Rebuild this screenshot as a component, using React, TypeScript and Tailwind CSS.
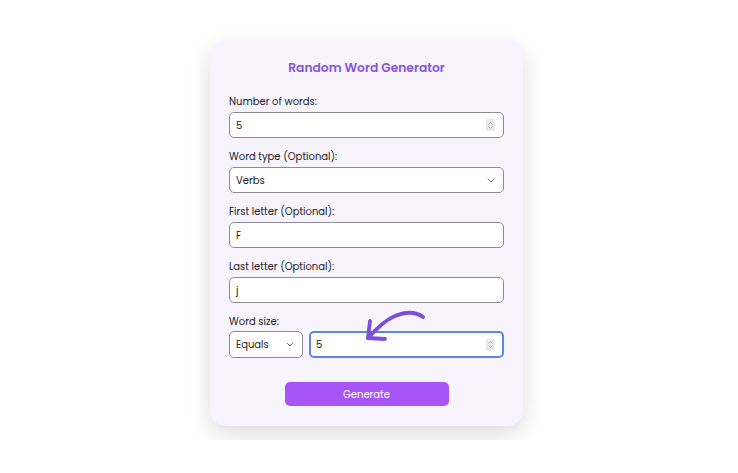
import React from "react";

const font = { fontFamily: "Poppins, 'Inter', 'Noto Sans', sans-serif" };

function Chevron() {
  return (
    <svg width="8" height="5" viewBox="0 0 8 5" fill="none">
      <path d="M1 1 L4 4 L7 1" stroke="#777" strokeWidth="1" strokeLinecap="round" strokeLinejoin="round" />
    </svg>
  );
}

function Spinner() {
  return (
    <div className="flex h-[12px] w-[9px] flex-col items-center justify-center gap-[1px] rounded-[1px] bg-[#e9e9ec]">
      <svg width="5" height="3" viewBox="0 0 5 3"><path d="M0.5 2.5 L2.5 0.6 L4.5 2.5" stroke="#a0a0a6" strokeWidth="0.8" fill="none" /></svg>
      <svg width="5" height="3" viewBox="0 0 5 3"><path d="M0.5 0.5 L2.5 2.4 L4.5 0.5" stroke="#a0a0a6" strokeWidth="0.8" fill="none" /></svg>
    </div>
  );
}

function Field({ label, value, kind }: { label: string; value: string; kind: "number" | "select" | "text" }) {
  return (
    <div className="flex flex-col gap-[3px]">
      <div className="text-[10px] leading-[14px] text-[#222]">{label}</div>
      <div className="flex h-[26px] items-center justify-between rounded-[5px] border border-[#8c8c92] bg-white pl-[6px] pr-[8px] text-[10px] text-[#222]">
        <span>{value}</span>
        {kind === "number" && <Spinner />}
        {kind === "select" && <Chevron />}
      </div>
    </div>
  );
}

export default function App() {
  return (
    <div className="h-[473px] w-[738px] bg-white" style={font}>
      <div className="h-[440px] overflow-hidden pt-[40px]">
        <div className="relative ml-[210px] w-[313px] rounded-[16px] bg-[#f7f4fe] px-[19px] pb-[20px] pt-[18px] shadow-[0_8px_22px_rgba(0,0,0,0.14)]">
          <div className="text-center text-[12.3px] font-semibold leading-[20px] text-[#8656da]">Random Word Generator</div>
          <div className="mt-[17px] flex flex-col gap-[12px]">
            <Field label="Number of words:" value="5" kind="number" />
            <Field label="Word type (Optional):" value="Verbs" kind="select" />
            <Field label="First letter (Optional):" value="F" kind="text" />
            <Field label="Last letter (Optional):" value="j" kind="text" />
            <div className="flex flex-col gap-[2px]">
              <div className="text-[10px] leading-[14px] text-[#222]">Word size:</div>
              <div className="flex gap-[6px]">
                <div className="flex h-[27px] w-[74px] items-center justify-between rounded-[5px] border border-[#8c8c92] bg-white pl-[6px] pr-[8px] text-[10px] text-[#222]">
                  <span>Equals</span>
                  <Chevron />
                </div>
                <div className="flex h-[27px] flex-1 items-center justify-between rounded-[5px] border-2 border-solid border-[#5a86e0] bg-white pl-[5px] pr-[7px] text-[10px] text-[#222]">
                  <span>5</span>
                  <Spinner />
                </div>
              </div>
            </div>
          </div>
          <div className="mt-[24px] flex justify-center">
            <div className="flex h-[24px] w-[164px] items-center justify-center rounded-[5px] bg-[#a855f7] text-[10px] text-white">Generate</div>
          </div>
          <svg className="absolute left-[145px] top-[262px]" width="70" height="40" viewBox="0 0 70 40" fill="none">
            <path d="M68 15 C 60 9, 50 10, 40 14 C 30 18, 22 26, 13 36" stroke="#7c4fd8" strokeWidth="3.8" strokeLinecap="round" fill="none" />
            <path d="M15 19 L 13 36 L 30 37" stroke="#7c4fd8" strokeWidth="3.8" strokeLinecap="round" strokeLinejoin="round" fill="none" />
          </svg>
        </div>
      </div>
    </div>
  );
}
